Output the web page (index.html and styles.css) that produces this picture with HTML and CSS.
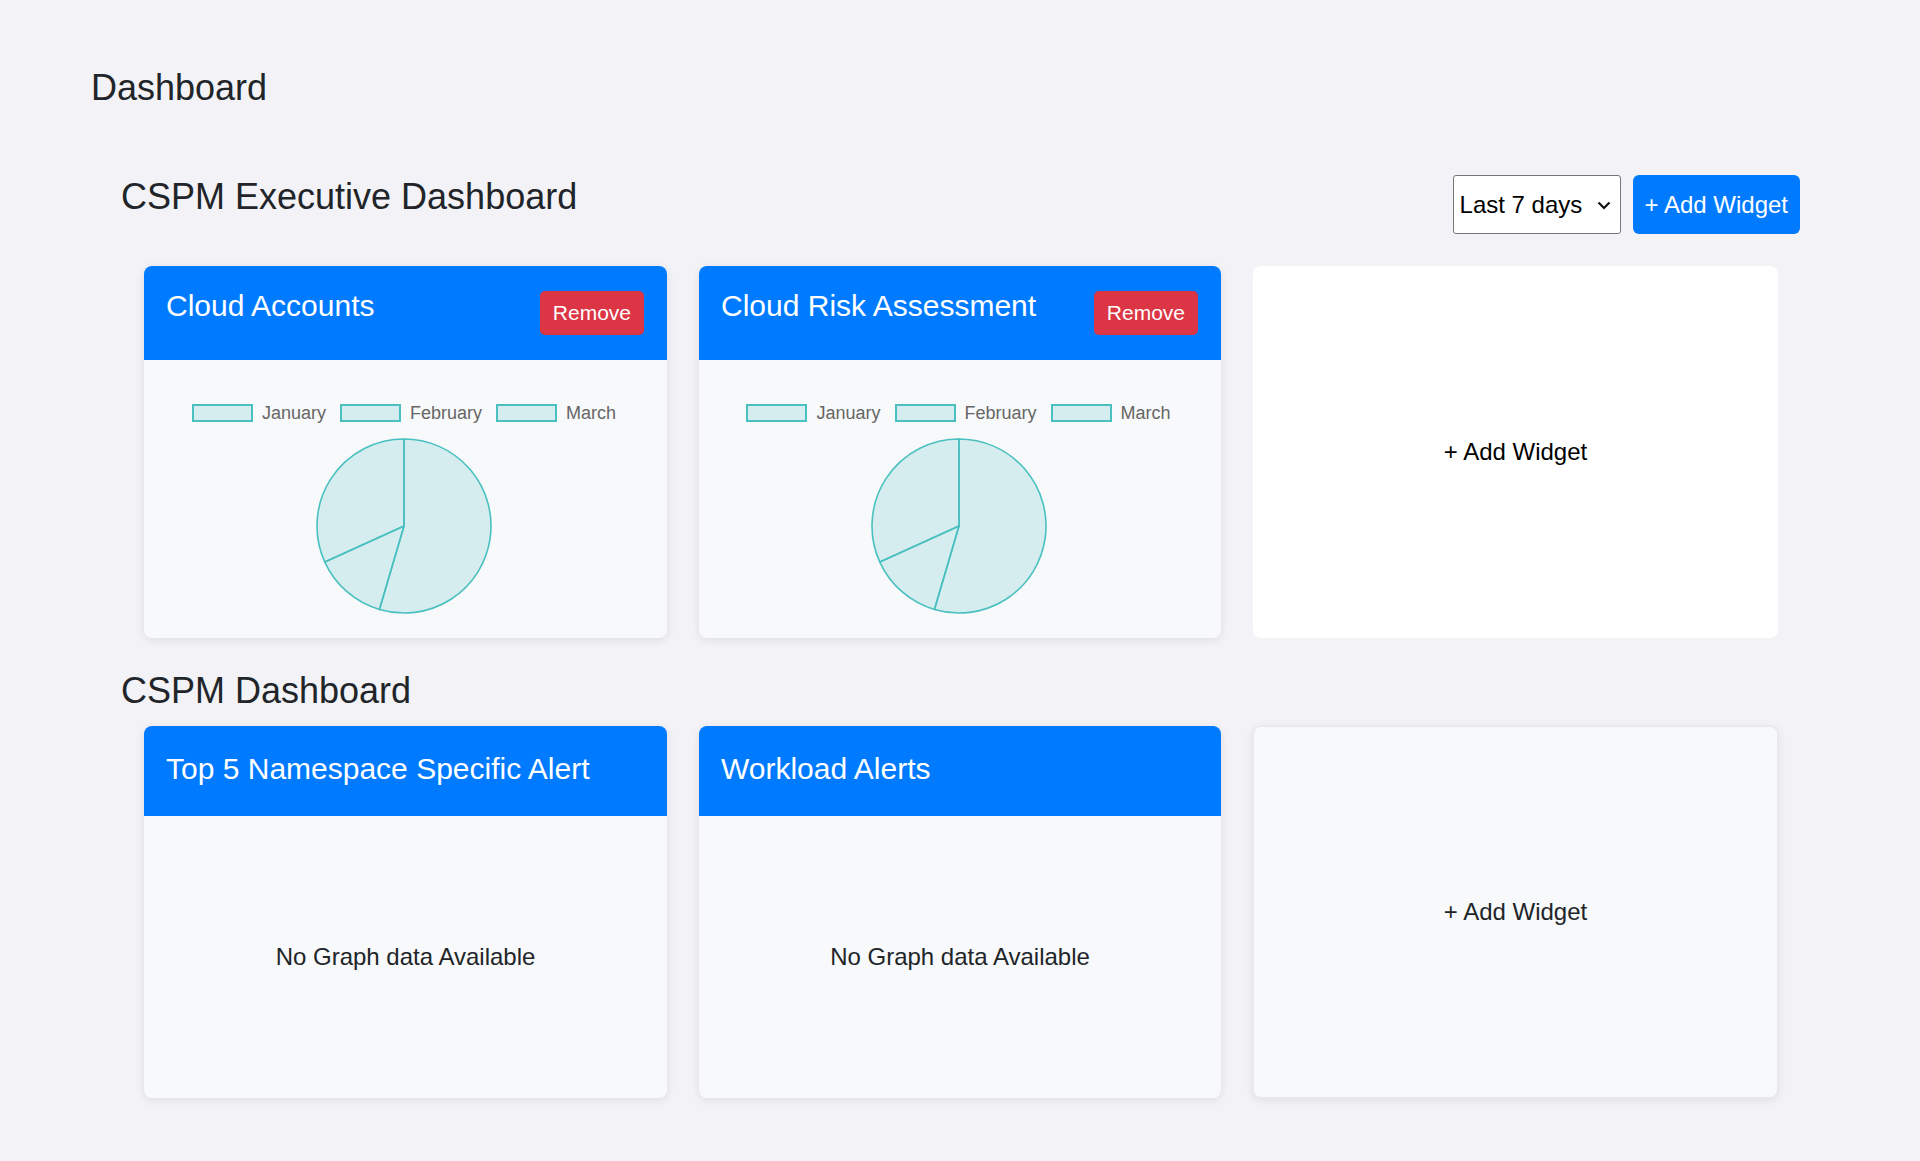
FILE: index.html
```html
<!DOCTYPE html>
<html lang="en">
<head>
<meta charset="utf-8">
<title>Dashboard</title>
<link rel="stylesheet" href="styles.css">
</head>
<body>
<div class="page">
  <h1 class="page-title">Dashboard</h1>

  <section class="section section-exec">
    <div class="section-head">
      <h2 class="section-title">CSPM Executive Dashboard</h2>
      <div class="actions">
        <div class="select">
          <span>Last 7 days</span>
          <svg class="chev" width="14" height="9" viewBox="0 0 14 9"><path d="M1.5 1.5 L7 7 L12.5 1.5" fill="none" stroke="#111" stroke-width="2.2"/></svg>
        </div>
        <button class="btn-primary">+ Add Widget</button>
      </div>
    </div>
    <div class="grid">
      <div class="card">
        <div class="card-head card-head-actions">
          <h3 class="card-title">Cloud Accounts</h3>
          <button class="btn-remove">Remove</button>
        </div>
        <div class="card-body chart-body">
          <div class="legend">
            <span class="lg-item"><span class="lg-box"></span>January</span>
            <span class="lg-item"><span class="lg-box"></span>February</span>
            <span class="lg-item"><span class="lg-box"></span>March</span>
          </div>
          <svg class="pie" width="176" height="176" viewBox="0 0 176 176">
            <path d="M88 88 L88 1 A87 87 0 1 1 63.44 171.46 Z"/>
            <path d="M88 88 L63.44 171.46 A87 87 0 0 1 8.83 124.08 Z"/>
            <path d="M88 88 L8.83 124.08 A87 87 0 0 1 88 1 Z"/>
          </svg>
        </div>
      </div>
      <div class="card">
        <div class="card-head card-head-actions">
          <h3 class="card-title">Cloud Risk Assessment</h3>
          <button class="btn-remove">Remove</button>
        </div>
        <div class="card-body chart-body">
          <div class="legend">
            <span class="lg-item"><span class="lg-box"></span>January</span>
            <span class="lg-item"><span class="lg-box"></span>February</span>
            <span class="lg-item"><span class="lg-box"></span>March</span>
          </div>
          <svg class="pie" width="176" height="176" viewBox="0 0 176 176">
            <path d="M88 88 L88 1 A87 87 0 1 1 63.44 171.46 Z"/>
            <path d="M88 88 L63.44 171.46 A87 87 0 0 1 8.83 124.08 Z"/>
            <path d="M88 88 L8.83 124.08 A87 87 0 0 1 88 1 Z"/>
          </svg>
        </div>
      </div>
      <div class="add-card add-card-white">+ Add Widget</div>
    </div>
  </section>

  <section class="section section-cspm">
    <div class="section-head">
      <h2 class="section-title">CSPM Dashboard</h2>
    </div>
    <div class="grid">
      <div class="card">
        <div class="card-head">
          <h3 class="card-title">Top 5 Namespace Specific Alert</h3>
        </div>
        <div class="card-body empty-body">No Graph data Available</div>
      </div>
      <div class="card">
        <div class="card-head">
          <h3 class="card-title">Workload Alerts</h3>
        </div>
        <div class="card-body empty-body">No Graph data Available</div>
      </div>
      <div class="add-card add-card-grey">+ Add Widget</div>
    </div>
  </section>
</div>
</body>
</html>
```

FILE: styles.css
```css
* { box-sizing: border-box; }

html, body {
  margin: 0;
  padding: 0;
}

body {
  background: #f3f3f7;
  font-family: "Liberation Sans", Arial, sans-serif;
  color: #212529;
}

.page {
  padding: 67px 120px 40px 91px;
}

.page-title {
  margin: 0;
  font-size: 36px;
  line-height: 42px;
  font-weight: 400;
}

.section {
  margin-left: 30px;
}

.section-exec {
  margin-top: 66px;
}

.section-cspm {
  margin-top: 32px;
}

.section-head {
  display: flex;
  justify-content: space-between;
  align-items: flex-start;
}

.section-title {
  margin: 0;
  font-size: 36px;
  line-height: 42px;
  font-weight: 400;
}

.section-exec .section-title {
  padding-top: 1px;
}

.actions {
  display: flex;
  gap: 12px;
}

.select {
  width: 168px;
  height: 59px;
  background: #fff;
  border: 1px solid #767676;
  border-radius: 3px;
  display: flex;
  align-items: center;
  justify-content: space-between;
  padding: 0 9px 0 6px;
  font-size: 24px;
  color: #000;
}

.chev { display: block; margin-top: 2px; }

.btn-primary {
  height: 59px;
  border: none;
  border-radius: 6px;
  background: #007bff;
  color: #fff;
  font-family: "Liberation Sans", Arial, sans-serif;
  font-size: 24px;
  padding: 0 12px;
  white-space: nowrap;
}

.grid {
  display: grid;
  grid-template-columns: 523px 522px 1fr;
  column-gap: 32px;
  margin: 32px 22px 0 23px;
}

.section-cspm .grid {
  margin-top: 14px;
}

.card {
  height: 372px;
  background: #f8f9fa;
  border-radius: 8px;
  box-shadow: 0 2px 10px rgba(0, 0, 0, 0.09);
  display: flex;
  flex-direction: column;
  overflow: hidden;
}

.card-head {
  background: #007bff;
  color: #fff;
  display: flex;
  justify-content: space-between;
  align-items: flex-start;
  padding: 25px 23px 25px 22px;
}

.card-title {
  margin: 0 0 4px;
  font-size: 30px;
  line-height: 36px;
  font-weight: 400;
}

.card-head-actions .card-title {
  margin-top: -3px;
}

.btn-remove {
  height: 44px;
  border: none;
  border-radius: 5px;
  background: #dc3545;
  color: #fff;
  font-family: "Liberation Sans", Arial, sans-serif;
  font-size: 21px;
  padding: 0 13px;
  white-space: nowrap;
}

.card-body {
  flex: 1;
}

.chart-body {
  display: flex;
  flex-direction: column;
  align-items: center;
  padding-top: 44px;
}

.legend {
  display: flex;
  gap: 14px;
  height: 18px;
  align-items: center;
  margin-left: -3px;
  margin-bottom: 16px;
}

.lg-item {
  display: flex;
  align-items: center;
  gap: 9px;
  font-size: 18px;
  color: #666;
}

.lg-box {
  width: 61px;
  height: 18px;
  border: 2px solid rgb(75, 192, 192);
  background: rgba(75, 192, 192, 0.2);
}

.pie {
  display: block;
  margin-left: -3px;
}

.pie path {
  fill: rgba(75, 192, 192, 0.2);
  stroke: rgb(75, 192, 192);
  stroke-width: 1.6;
  stroke-linejoin: round;
}

.empty-body {
  display: flex;
  align-items: center;
  justify-content: center;
  font-size: 24px;
  color: #212529;
}

.add-card {
  height: 372px;
  border-radius: 8px;
  display: flex;
  align-items: center;
  justify-content: center;
  font-size: 24px;
}

.add-card-white {
  background: #fff;
  color: #000;
}

.add-card-grey {
  background: #f8f9fa;
  color: #212529;
  box-shadow: 0 2px 10px rgba(0, 0, 0, 0.09);
  border: 1px solid #e8e8ec;
}
```
